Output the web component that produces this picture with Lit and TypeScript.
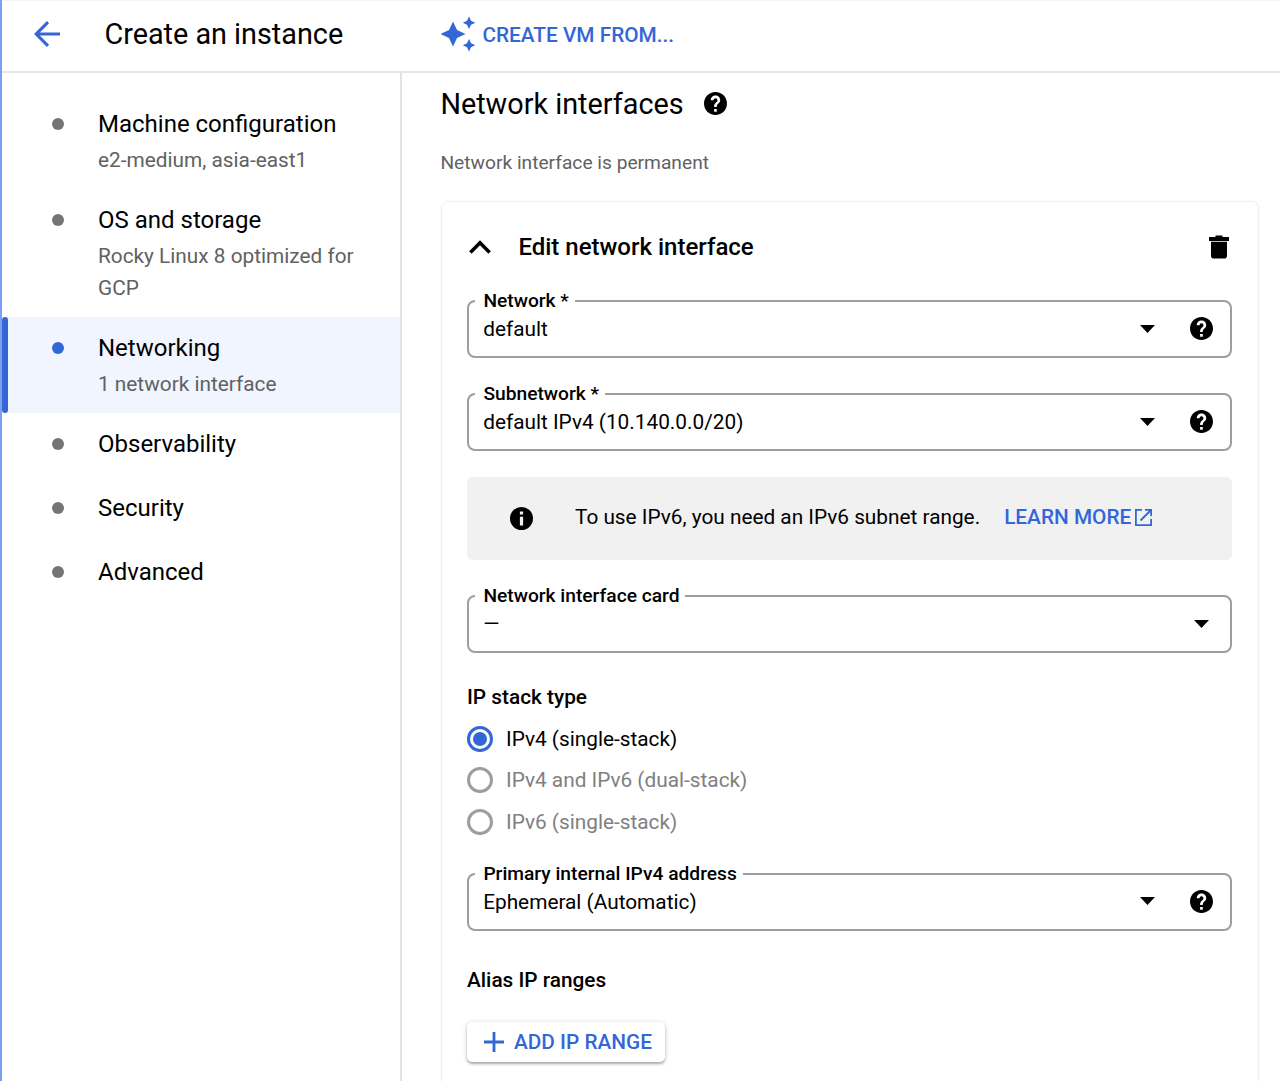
import { LitElement, html, css, nothing } from "lit";
import { customElement, property, state } from "lit/decorators.js";
import { classMap } from "lit/directives/class-map.js";

const helpIcon = html`<svg class="help" viewBox="2 2 20 20" width="23" height="23">
  <path fill="currentColor" stroke="none" d="M12 2C6.48 2 2 6.48 2 12s4.48 10 10 10 10-4.48 10-10S17.52 2 12 2zm1.1 17.1h-2.3v-2.3h2.3v2.3zm2.07-7.75l-.9.92C13.55 13 13.1 13.6 13.1 15.1h-2.3v-.6c0-1.1.45-2.1 1.17-2.83l1.24-1.26c.37-.36.49-.86.49-1.31 0-.95-.75-1.7-1.7-1.7s-1.7.75-1.7 1.8H7.9c0-2.31 1.79-4.1 4.1-4.1s4.1 1.79 4.1 4.1c0 .88-.36 1.6-.93 2.15z"/>
</svg>`;

const arrow = html`<svg class="arrow" viewBox="0 0 15 8" width="15" height="8"><path d="M0 0h15L7.5 8z"/></svg>`;

@customElement("outlined-select")
export class OutlinedSelect extends LitElement {
  @property() label = "";
  @property() value = "";
  @property({ type: Boolean }) help = false;

  static styles = css`
    :host { display: block; }
    .box {
      margin: 0; padding: 0; min-width: 0; height: 67px; box-sizing: border-box;
      border: 2px solid #9a9fa4; border-radius: 8px;
    }
    .label {
      margin-left: 6px; padding: 0 6px 0 8.4px; height: 20px;
      font-size: 19.2px; line-height: 19px; font-weight: 500; white-space: nowrap;
    }
    .row { display: flex; align-items: center; height: 35px; padding: 0 17.5px 0 14.2px; gap: 35px; }
    .row.bare { padding-right: 21.5px; }
    .value { flex: 1; font-size: 20.8px; line-height: 32px; padding-top: 1px; }
  `;

  render() {
    return html`<fieldset class="box">
      <legend class="label">${this.label}</legend>
      <div class=${classMap({ row: true, bare: !this.help })}>
        <span class="value">${this.value}</span>${arrow}${this.help ? helpIcon : nothing}
      </div>
    </fieldset>`;
  }
}

interface Step { title: string; sub?: string; }

@customElement("app-root")
export class AppRoot extends LitElement {
  @state() active = "Networking";
  @state() stack = "IPv4 (single-stack)";

  private steps: Step[] = [
    { title: "Machine configuration", sub: "e2-medium, asia-east1" },
    { title: "OS and storage", sub: "Rocky Linux 8 optimized for GCP" },
    { title: "Networking", sub: "1 network interface" },
    { title: "Observability" },
    { title: "Security" },
    { title: "Advanced" },
  ];

  private stacks = ["IPv4 (single-stack)", "IPv4 and IPv6 (dual-stack)", "IPv6 (single-stack)"];

  static styles = css`
    :host {
      display: flex; flex-direction: column; box-sizing: border-box; height: 1081px; overflow: hidden;
      border-left: 2px solid #7a9ff3; background: #fff; color: #000;
      font-family: Roboto, "Liberation Sans", sans-serif;
    }
    svg { display: block; flex: none; }
    .bar {
      display: flex; align-items: center; flex: none; height: 73px; box-sizing: border-box;
      border-top: 1px solid #f3f3f3; border-bottom: 2px solid #e6e6e6; padding-left: 32px; color: #3367d6;
    }
    .page { margin: -5px 0 0 44.4px; width: 336.6px; font-size: 28.8px; line-height: 36px; color: #000; }
    .from { display: flex; align-items: center; gap: 7.4px; font-size: 20.8px; font-weight: 500; margin-top: -5px; }
    .from-text { margin-top: 3px; }
    .back { margin-top: -4px; }
    .body { display: flex; flex: 1; min-height: 0; }
    .side { width: 398px; flex: none; border-right: 2px solid #e2e2e2; padding-top: 20px; }
    .step { display: flex; box-sizing: border-box; padding: 16px 40px 13px 0; }
    .step.plain { padding-bottom: 16px; }
    .step.active { background: #f0f5ff; }
    .mark { width: 6px; border-radius: 3px; margin: -16px 44px -13px 0; flex: none; }
    .active .mark { background: #3367d6; }
    .dot { width: 12px; height: 12px; border-radius: 50%; background: #757575; flex: none; margin: 9px 34px 0 0; }
    .active .dot { background: #3367d6; }
    .step-title { font-size: 24px; line-height: 31px; }
    .step-sub { font-size: 20.8px; line-height: 32px; margin-top: 4px; color: #616161; }
    .step.plain .step-title { padding-bottom: 1px; }
    .main { flex: 1; min-width: 0; padding: 13px 22px 0 38.4px; display: flex; flex-direction: column; }
    .heading { display: flex; align-items: center; gap: 20.4px; font-size: 28.8px; line-height: 36px; }
    .heading .help { margin-top: -1px; }
    .note { font-size: 19.2px; line-height: 28px; color: #616161; margin: 27px 0 25px; }
    .card {
      flex: 1; margin-left: 1.6px; border-radius: 6px; padding: 28px 26px 0 25px; margin-bottom: -20px;
      box-shadow: 0 0 2px 1px rgba(0,0,0,.07), 0 2px 3px rgba(0,0,0,.05);
    }
    .card-head { display: flex; align-items: center; height: 33px; padding: 0 3px 0 2px; }
    .card-title { flex: 1; margin-left: 27.4px; font-size: 24px; font-weight: 500; }
    .network { margin-top: 28px; }
    .subnet { margin-top: 26px; }
    .info {
      display: flex; align-items: center; height: 83px; margin-top: 26px; padding-left: 43px;
      border-radius: 6px; background: #f1f1f1; font-size: 20.8px;
    }
    .info-text { margin: -3px 0 0 42px; }
    .link { display: flex; align-items: center; gap: 4px; margin: -3px 0 0 24px; color: #3367d6; font-weight: 500; }
    .nic { margin-top: 26px; }
    .group-title { font-size: 20.8px; line-height: 28px; font-weight: 500; }
    .stack { margin-top: 30px; }
    .radio { display: flex; align-items: center; gap: 13px; height: 41.6px; font-size: 20.8px; }
    .radios { margin-top: 7px; }
    .radio.off { color: #808080; }
    .ring {
      display: grid; place-items: center; box-sizing: border-box; width: 26px; height: 26px;
      border: 3px solid #9e9e9e; border-radius: 50%;
    }
    .on .ring { border-color: #3367d6; }
    .on .pip { width: 14px; height: 14px; border-radius: 50%; background: #3367d6; }
    .primary { margin-top: 21px; }
    .alias { margin-top: 35px; }
    .add {
      display: inline-flex; align-items: center; height: 40px; margin-top: 28px; padding: 0 13px 0 17px; gap: 10px;
      border-radius: 5px; font-size: 20.8px; font-weight: 500; color: #3367d6; background: #fff;
      box-shadow: 0 2px 2px rgba(0,0,0,.22), 0 1px 5px rgba(0,0,0,.2);
    }
  `;

  render() {
    return html`
      <header class="bar">
        <svg class="back" width="26" height="26" viewBox="0 0 26 26" fill="none" stroke="currentColor" stroke-width="3.1"><path d="M26 13H2.5M14 1.2L2.2 13L14 24.8"/></svg>
        <div class="page">Create an instance</div>
        <div class="from">
          <svg width="34" height="36" viewBox="0 0 34 36" fill="currentColor">
            <path d="M12 5.5L16 14L24.5 18L16 22L12 30.5L8 22L-.5 18L8 14z"/>
            <path d="M28 .5L30 4.8L34.2 6.8L30 8.8L28 13L26 8.8L21.8 6.8L26 4.8z"/>
            <path d="M28 23L30 27.2L34.2 29.2L30 31.2L28 35.5L26 31.2L21.8 29.2L26 27.2z"/>
          </svg>
          <span class="from-text">CREATE VM FROM...</span>
        </div>
      </header>
      <div class="body">
        <nav class="side">
          ${this.steps.map((s) => html`
            <div class=${classMap({ step: true, active: s.title === this.active, plain: !s.sub })} @click=${() => (this.active = s.title)}>
              <span class="mark"></span><span class="dot"></span>
              <div>
                <div class="step-title">${s.title}</div>
                ${s.sub ? html`<div class="step-sub">${s.sub}</div>` : nothing}
              </div>
            </div>`)}
        </nav>
        <main class="main">
          <div class="heading">Network interfaces ${helpIcon}</div>
          <div class="note">Network interface is permanent</div>
          <section class="card">
            <div class="card-head">
              <svg width="22" height="14" viewBox="0 0 22 14" fill="none" stroke="#000" stroke-width="3.5"><path d="M1.4 12.4L11 2.8L20.6 12.4"/></svg>
              <span class="card-title">Edit network interface</span>
              <svg width="20" height="24" viewBox="0 0 20 24"><path d="M6.5 .5h7V2H20v4H0V2h6.5zM2 6.8h16V20.7Q18 23.5 15.2 23.5H4.8Q2 23.5 2 20.7z"/></svg>
            </div>
            <outlined-select class="network" label="Network *" value="default" help></outlined-select>
            <outlined-select class="subnet" label="Subnetwork *" value="default IPv4 (10.140.0.0/20)" help></outlined-select>
            <div class="info">
              <svg width="23" height="23" viewBox="2 2 20 20"><path fill-rule="evenodd" d="M12 2a10 10 0 1 0 0 20a10 10 0 1 0 0-20zM10.6 6h2.8v2.6h-2.8zM10.6 10.4h2.8V18h-2.8z"/></svg>
              <span class="info-text">To use IPv6, you need an IPv6 subnet range.</span>
              <span class="link">LEARN MORE
                <svg width="17" height="17" viewBox="0 0 17 17" fill="none" stroke="currentColor" stroke-width="1.8"><path d="M7 .9H.9V16.1H16.1V10M10 .9H16.1V7M16 1L5.5 11.5"/></svg>
              </span>
            </div>
            <outlined-select class="nic" label="Network interface card" value="—"></outlined-select>
            <div class="group-title stack">IP stack type</div>
            <div class="radios">
              ${this.stacks.map((s) => html`
                <div class=${classMap({ radio: true, on: s === this.stack, off: s !== this.stack })}>
                  <span class="ring"><span class="pip"></span></span>${s}
                </div>`)}
            </div>
            <outlined-select class="primary" label="Primary internal IPv4 address" value="Ephemeral (Automatic)" help></outlined-select>
            <div class="group-title alias">Alias IP ranges</div>
            <div class="add">
              <svg width="20" height="20" viewBox="0 0 20 20" fill="none" stroke="currentColor" stroke-width="2.8"><path d="M10 0V20M0 10H20"/></svg>
              ADD IP RANGE
            </div>
          </section>
        </main>
      </div>`;
  }
}
